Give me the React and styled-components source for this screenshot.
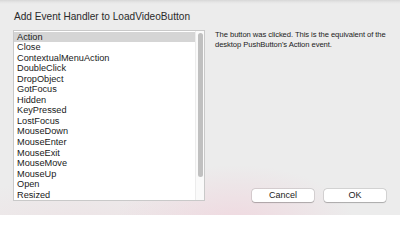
import React from "react";
import styled, { createGlobalStyle } from "styled-components";

const Global = createGlobalStyle`
  html, body { margin: 0; padding: 0; }
  body {
    width: 400px; height: 215px; overflow: hidden;
    font-family: "Liberation Sans", Arial, sans-serif;
    -webkit-font-smoothing: antialiased;
  }
`;

const Dialog = styled.div`
  width: 400px;
  height: 215px;
  box-sizing: border-box;
  padding: 11px 14px 0 13px;
  display: flex;
  flex-direction: column;
  background:
    linear-gradient(to bottom, rgba(0,0,0,0.09) 0px, rgba(0,0,0,0.03) 2px, rgba(0,0,0,0) 4px),
    radial-gradient(ellipse 120px 60px at 235px 225px, rgba(240,214,222,0.9), rgba(240,214,222,0) 100%),
    radial-gradient(ellipse 160px 50px at 80px 230px, rgba(238,222,226,0.7), rgba(238,222,226,0) 100%),
    #ececec;
`;

const Title = styled.div`
  font-size: 10.1px;
  line-height: 11px;
  color: #2a2a2a;
  height: 11px;
  margin-bottom: 8px;
  padding-left: 1px;
`;

const Body = styled.div`
  display: flex;
  gap: 10px;
  height: 172px;
`;

const ListBox = styled.div`
  width: 192px;
  height: 171px;
  box-sizing: border-box;
  border: 1px solid #c9c9c9;
  background: #fff;
  display: flex;
`;

const Rows = styled.div`
  flex: 1;
  padding-top: 0.5px;
  overflow: hidden;
`;

const Row = styled.div`
  height: 10.55px;
  line-height: 10.55px;
  padding-left: 3px;
  font-size: 9.2px;
  color: #1a1a1a;
  white-space: nowrap;
  background: ${(p) => (p.$selected ? "#d5d5d5" : "transparent")};
`;

const Track = styled.div`
  width: 9px;
  border-left: 1px solid #ececec;
  background: #fafafa;
  box-sizing: border-box;
  padding: 2px 0 0 2px;
`;

const Thumb = styled.div`
  width: 5px;
  height: 144px;
  border-radius: 3px;
  background: #c0c0c0;
`;

const Side = styled.div`
  flex: 1;
  display: flex;
  flex-direction: column;
  justify-content: space-between;
`;

const Description = styled.p`
  margin: 0;
  font-size: 7.65px;
  letter-spacing: -0.08px;
  line-height: 10px;
  color: #222;
`;

const Buttons = styled.div`
  display: flex;
  justify-content: flex-end;
  gap: 10px;
`;

const Button = styled.button`
  width: 62px;
  height: 13px;
  padding: 0;
  border: none;
  border-radius: 3px;
  background: #fff;
  font-family: "Liberation Sans", Arial, sans-serif;
  font-size: 9px;
  line-height: 13px;
  color: #222;
  box-shadow: 0 0 0 0.5px rgba(0,0,0,0.18), 0 0.5px 1px rgba(0,0,0,0.2);
`;

const events = [
  "Action", "Close", "ContextualMenuAction", "DoubleClick", "DropObject",
  "GotFocus", "Hidden", "KeyPressed", "LostFocus", "MouseDown", "MouseEnter",
  "MouseExit", "MouseMove", "MouseUp", "Open", "Resized",
];

export default function App() {
  return (
    <>
      <Global />
      <Dialog>
        <Title>Add Event Handler to LoadVideoButton</Title>
        <Body>
          <ListBox>
            <Rows>
              {events.map((e, i) => (
                <Row key={e} $selected={i === 0}>{e}</Row>
              ))}
            </Rows>
            <Track><Thumb /></Track>
          </ListBox>
          <Side>
            <Description>
              The button was clicked. This is the equivalent of the desktop PushButton's Action event.
            </Description>
            <Buttons>
              <Button>Cancel</Button>
              <Button>OK</Button>
            </Buttons>
          </Side>
        </Body>
      </Dialog>
    </>
  );
}
